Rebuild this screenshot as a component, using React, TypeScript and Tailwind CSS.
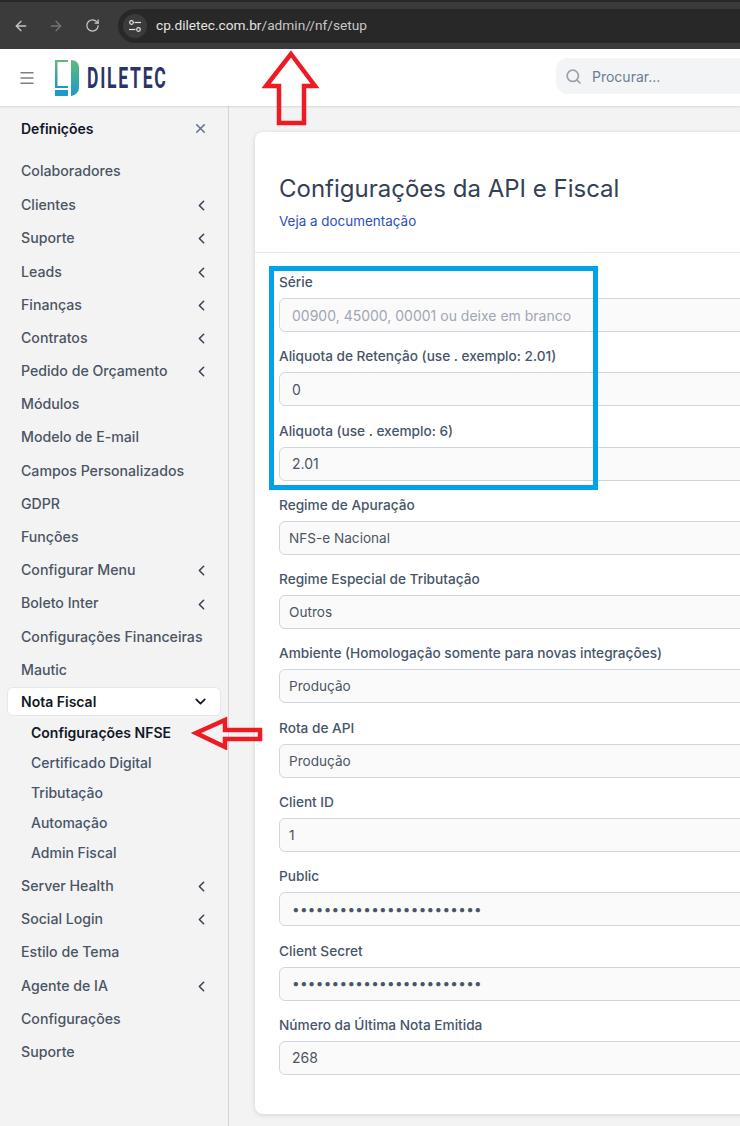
import { ArrowLeft, ArrowRight, ChevronDown, ChevronLeft, Menu, RotateCw, Search, X } from "lucide-react"

const menuTop = [
  { label: "Colaboradores" },
  { label: "Clientes", arrow: true },
  { label: "Suporte", arrow: true },
  { label: "Leads", arrow: true },
  { label: "Finanças", arrow: true },
  { label: "Contratos", arrow: true },
  { label: "Pedido de Orçamento", arrow: true },
  { label: "Módulos" },
  { label: "Modelo de E-mail" },
  { label: "Campos Personalizados" },
  { label: "GDPR" },
  { label: "Funções" },
  { label: "Configurar Menu", arrow: true },
  { label: "Boleto Inter", arrow: true },
  { label: "Configurações Financeiras" },
  { label: "Mautic" },
]

const menuBottom = [
  { label: "Server Health", arrow: true },
  { label: "Social Login", arrow: true },
  { label: "Estilo de Tema" },
  { label: "Agente de IA", arrow: true },
  { label: "Configurações" },
  { label: "Suporte" },
]

const subMenu = ["Configurações NFSE", "Certificado Digital", "Tributação", "Automação", "Admin Fiscal"]

const fields = [
  { label: "Série", value: "00900, 45000, 00001 ou deixe em branco", placeholder: true, indent: true },
  { label: "Aliquota de Retenção (use . exemplo: 2.01)", value: "0", indent: true },
  { label: "Aliquota (use . exemplo: 6)", value: "2.01", indent: true },
  { label: "Regime de Apuração", value: "NFS-e Nacional" },
  { label: "Regime Especial de Tributação", value: "Outros" },
  { label: "Ambiente (Homologação somente para novas integrações)", value: "Produção" },
  { label: "Rota de API", value: "Produção" },
  { label: "Client ID", value: "1" },
  { label: "Public", value: "••••••••••••••••••••••••", secret: true },
  { label: "Client Secret", value: "••••••••••••••••••••••••", secret: true },
  { label: "Número da Última Nota Emitida", value: "268", indent: true },
]

function MenuRow({ label, arrow, className }: { label: string; arrow?: boolean; className?: string }) {
  return (
    <div className={`flex h-[33.2px] shrink-0 items-center justify-between pl-[21px] pr-[18px] text-[14.15px] font-medium text-[#4b5563] ${className ?? ""}`}>
      <span>{label}</span>
      {arrow && <ChevronLeft className="mt-[2px] h-[17px] w-[17px] text-[#374151]" strokeWidth={2.2} />}
    </div>
  )
}

function Field({ label, value, placeholder, indent, secret }: { label: string; value: string; placeholder?: boolean; indent?: boolean; secret?: boolean }) {
  return (
    <div className="flex flex-col">
      <div className="mb-[6px] h-[20px] text-[13.65px] font-medium leading-[20px] text-[#475569]">{label}</div>
      <div
        className={`flex h-[34px] items-center rounded-[6px] border border-[#d1d5e0] bg-[#fafafa] ${indent ? "pl-[12px] text-[14px]" : "pl-[9px] text-[13.6px]"} ${placeholder ? "text-[#a1a7b3]" : "text-[#4b5563]"} ${secret ? "pl-[12px] tracking-[0.27px]" : ""}`}
      >
        {value}
      </div>
    </div>
  )
}

export default function App() {
  return (
    <div className="relative flex h-[1126px] w-[740px] flex-col overflow-hidden bg-[#f3f3f4] font-['Inter',sans-serif]">
      {/* browser chrome */}
      <div className="flex h-[49px] shrink-0 items-center border-t-[2px] border-[#292929] bg-[#3b3b3b] pl-[13px]">
        <ArrowLeft className="h-[16px] w-[16px] text-[#c7c7c7]" />
        <ArrowRight className="ml-[19px] h-[16px] w-[16px] text-[#757575]" />
        <RotateCw className="ml-[21px] h-[15px] w-[15px] text-[#c7c7c7]" />
        <div className="ml-[18px] flex h-[34px] flex-1 items-center rounded-l-full bg-[#282828] pl-[5px]">
          <div className="flex h-[24px] w-[24px] items-center justify-center rounded-full bg-[#3b3b3b]">
            <svg className="h-[14px] w-[14px]" viewBox="0 0 14 14" fill="none" stroke="#e3e3e3" strokeWidth="1.2">
              <circle cx="3.5" cy="3.5" r="1.8" />
              <path d="M6.5 3.5H13" />
              <circle cx="10.5" cy="10.5" r="1.8" />
              <path d="M1 10.5H7.5" />
            </svg>
          </div>
          <span className="ml-[9px] font-['Roboto',sans-serif] text-[13.7px] text-[#c7c7c7]">
            <span className="text-[#e3e3e3]">cp.diletec.com.br</span>/admin//nf/setup
          </span>
        </div>
      </div>

      {/* app header */}
      <div className="relative z-10 flex h-[57px] shrink-0 items-center bg-white pl-[18px] shadow-[0_1px_2px_rgba(0,0,0,0.12)]">
        <Menu className="h-[18px] w-[18px] text-[#7b8088]" />
        <svg className="ml-[19px] h-[36px] w-[24px]" viewBox="0 0 24 36" fill="none">
          <defs>
            <linearGradient id="logo" x1="0" y1="0" x2="0" y2="1">
              <stop offset="0" stopColor="#5fbb7a" />
              <stop offset="1" stopColor="#1b9ac6" />
            </linearGradient>
          </defs>
          <path d="M0 0H13V2H2.5V26H13V28H0z" fill="url(#logo)" />
          <path d="M16 0C21 0 24 3 24 8V27C24 32 21 35 16 36z" fill="url(#logo)" />
          <path d="M0 30H13V36H0z" fill="#1b9ac6" />
        </svg>
        <span className="ml-[8px] origin-left scale-x-[0.585] font-['Roboto',sans-serif] text-[30px] font-bold tracking-[3px] text-[#2b3468]">DILETEC</span>
        <div className="absolute left-[556px] top-[9px] flex h-[36px] w-[200px] items-center rounded-[12px] bg-[#f3f4f6] pl-[9px] text-[14px] text-[#6b7d93]">
          <Search className="h-[17px] w-[17px] text-[#9ca3af]" strokeWidth={2.5} />
          <span className="ml-[10px]">Procurar...</span>
        </div>
      </div>

      <div className="flex min-h-0 flex-1">
        {/* settings sidebar */}
        <aside className="flex w-[229px] shrink-0 flex-col border-r border-[#cdd7e4] pt-[6px]">
          <div className="flex h-[32px] shrink-0 items-center justify-between pl-[21px] pr-[20px] text-[14px] font-semibold text-[#111827]">
            <span>Definições</span>
            <X className="h-[15px] w-[15px] text-[#64748b]" strokeWidth={2.5} />
          </div>
          <div className="h-[10px] shrink-0" />
          {menuTop.map((item, i) => (
            <MenuRow key={item.label} label={item.label} arrow={item.arrow} className={i === 1 ? "mt-[1px]" : ""} />
          ))}
          <div className="ml-[7px] mr-[7px] mt-[1px] flex h-[29px] shrink-0 items-center justify-between rounded-[6px] border border-[#e5e7eb] bg-white pl-[13px] pr-[11px] text-[14px] font-semibold text-[#111827]">
            <span>Nota Fiscal</span>
            <ChevronDown className="h-[17px] w-[17px]" strokeWidth={2.5} />
          </div>
          <div className="flex flex-col pl-[31px] pt-[1px]">
            {subMenu.map((item, i) => (
              <div key={item} className={`flex h-[30px] items-center text-[14px] ${i === 0 ? "font-semibold text-[#111827]" : "font-medium text-[#475569]"}`}>
                {item}
              </div>
            ))}
          </div>
          <div className="h-[2px] shrink-0" />
          {menuBottom.map((item) => (
            <MenuRow key={item.label} label={item.label} arrow={item.arrow} />
          ))}
        </aside>

        {/* form card */}
        <main className="min-w-0 flex-1 pl-[26px] pt-[26px]">
          <div className="h-[982px] w-[600px] rounded-l-[8px] bg-white shadow-[0_1px_5px_rgba(0,0,0,0.14)]">
            <div className="h-[121px] border-b border-[#e5e7eb] pl-[24px] pt-[41px]">
              <h1 className="text-[24px] font-normal leading-[32px] text-[#334155]">Configurações da API e Fiscal</h1>
              <div className="mt-[6px] text-[13.45px] leading-[20px] text-[#2b4fb8]">Veja a documentação</div>
            </div>
            <div className="flex flex-col gap-[14.3px] pl-[24px] pt-[19px]">
              {fields.map((field) => (
                <Field key={field.label} {...field} />
              ))}
            </div>
          </div>
        </main>
      </div>

      {/* annotations drawn over the screenshot */}
      <div className="absolute left-[269px] top-[266px] z-20 h-[224px] w-[329px] border-[5px] border-[#00a2e8]" />
      <svg className="absolute left-[262px] top-[48px] z-20 h-[80px] w-[60px]" viewBox="0 0 60 80" fill="none">
        <path d="M29 6 L53 38 H42 V75 H17 V38 H4 Z" stroke="#ed1c24" strokeWidth="4.5" />
      </svg>
      <svg className="absolute left-[188px] top-[716px] z-20 h-[34px] w-[76px]" viewBox="0 0 76 34" fill="none">
        <path d="M8 17 L37 4 V14 H72 V23 H37 V31 Z" stroke="#ed1c24" strokeWidth="4.5" />
      </svg>
    </div>
  )
}
